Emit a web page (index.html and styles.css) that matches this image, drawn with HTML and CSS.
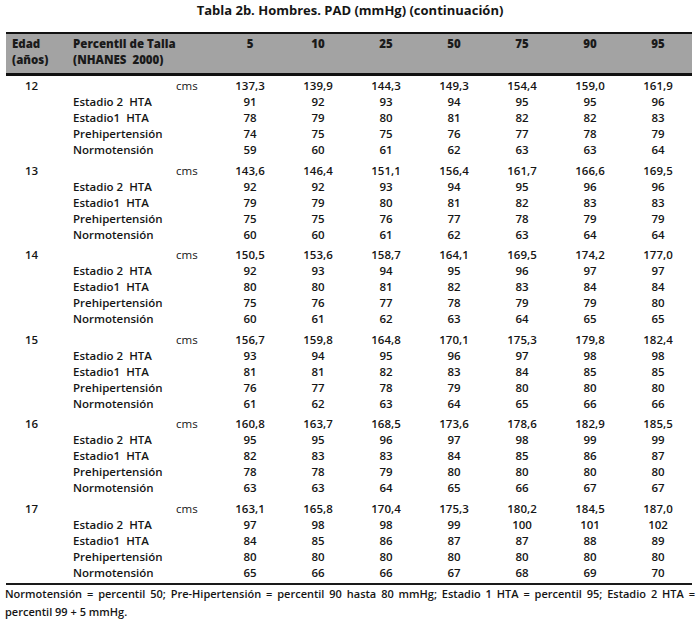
FILE: index.html
```html
<!DOCTYPE html>
<html lang="es">
<head>
<meta charset="utf-8">
<title>Tabla 2b</title>
<link rel="stylesheet" href="styles.css">
</head>
<body>
<div class="page">
  <h1 class="title">Tabla 2b. Hombres. PAD (mmHg) (continuación)</h1>
  <div class="table">
    <div class="head">
      <div class="hcell age-h"><div>Edad</div><div>(años)</div></div>
      <div class="hcell label-h"><div>Percentil de Talla</div><div>(NHANES&nbsp; 2000)</div></div>
      <div class="hcell"></div>
      <div class="hcell num">5</div>
      <div class="hcell num">10</div>
      <div class="hcell num">25</div>
      <div class="hcell num">50</div>
      <div class="hcell num">75</div>
      <div class="hcell num">90</div>
      <div class="hcell num">95</div>
    </div>

    <div class="block">
      <div class="row"><span class="age">12</span><span class="label"></span><span class="unit">cms</span><span class="num">137,3</span><span class="num">139,9</span><span class="num">144,3</span><span class="num">149,3</span><span class="num">154,4</span><span class="num">159,0</span><span class="num">161,9</span></div>
      <div class="row"><span class="age"></span><span class="label">Estadio 2&nbsp; HTA</span><span class="unit"></span><span class="num">91</span><span class="num">92</span><span class="num">93</span><span class="num">94</span><span class="num">95</span><span class="num">95</span><span class="num">96</span></div>
      <div class="row"><span class="age"></span><span class="label">Estadio1&nbsp; HTA</span><span class="unit"></span><span class="num">78</span><span class="num">79</span><span class="num">80</span><span class="num">81</span><span class="num">82</span><span class="num">82</span><span class="num">83</span></div>
      <div class="row"><span class="age"></span><span class="label">Prehipertensión</span><span class="unit"></span><span class="num">74</span><span class="num">75</span><span class="num">75</span><span class="num">76</span><span class="num">77</span><span class="num">78</span><span class="num">79</span></div>
      <div class="row"><span class="age"></span><span class="label">Normotensión</span><span class="unit"></span><span class="num">59</span><span class="num">60</span><span class="num">61</span><span class="num">62</span><span class="num">63</span><span class="num">63</span><span class="num">64</span></div>
    </div>

    <div class="block">
      <div class="row"><span class="age">13</span><span class="label"></span><span class="unit">cms</span><span class="num">143,6</span><span class="num">146,4</span><span class="num">151,1</span><span class="num">156,4</span><span class="num">161,7</span><span class="num">166,6</span><span class="num">169,5</span></div>
      <div class="row"><span class="age"></span><span class="label">Estadio 2&nbsp; HTA</span><span class="unit"></span><span class="num">92</span><span class="num">92</span><span class="num">93</span><span class="num">94</span><span class="num">95</span><span class="num">96</span><span class="num">96</span></div>
      <div class="row"><span class="age"></span><span class="label">Estadio1&nbsp; HTA</span><span class="unit"></span><span class="num">79</span><span class="num">79</span><span class="num">80</span><span class="num">81</span><span class="num">82</span><span class="num">83</span><span class="num">83</span></div>
      <div class="row"><span class="age"></span><span class="label">Prehipertensión</span><span class="unit"></span><span class="num">75</span><span class="num">75</span><span class="num">76</span><span class="num">77</span><span class="num">78</span><span class="num">79</span><span class="num">79</span></div>
      <div class="row"><span class="age"></span><span class="label">Normotensión</span><span class="unit"></span><span class="num">60</span><span class="num">60</span><span class="num">61</span><span class="num">62</span><span class="num">63</span><span class="num">64</span><span class="num">64</span></div>
    </div>

    <div class="block">
      <div class="row"><span class="age">14</span><span class="label"></span><span class="unit">cms</span><span class="num">150,5</span><span class="num">153,6</span><span class="num">158,7</span><span class="num">164,1</span><span class="num">169,5</span><span class="num">174,2</span><span class="num">177,0</span></div>
      <div class="row"><span class="age"></span><span class="label">Estadio 2&nbsp; HTA</span><span class="unit"></span><span class="num">92</span><span class="num">93</span><span class="num">94</span><span class="num">95</span><span class="num">96</span><span class="num">97</span><span class="num">97</span></div>
      <div class="row"><span class="age"></span><span class="label">Estadio1&nbsp; HTA</span><span class="unit"></span><span class="num">80</span><span class="num">80</span><span class="num">81</span><span class="num">82</span><span class="num">83</span><span class="num">84</span><span class="num">84</span></div>
      <div class="row"><span class="age"></span><span class="label">Prehipertensión</span><span class="unit"></span><span class="num">75</span><span class="num">76</span><span class="num">77</span><span class="num">78</span><span class="num">79</span><span class="num">79</span><span class="num">80</span></div>
      <div class="row"><span class="age"></span><span class="label">Normotensión</span><span class="unit"></span><span class="num">60</span><span class="num">61</span><span class="num">62</span><span class="num">63</span><span class="num">64</span><span class="num">65</span><span class="num">65</span></div>
    </div>

    <div class="block">
      <div class="row"><span class="age">15</span><span class="label"></span><span class="unit">cms</span><span class="num">156,7</span><span class="num">159,8</span><span class="num">164,8</span><span class="num">170,1</span><span class="num">175,3</span><span class="num">179,8</span><span class="num">182,4</span></div>
      <div class="row"><span class="age"></span><span class="label">Estadio 2&nbsp; HTA</span><span class="unit"></span><span class="num">93</span><span class="num">94</span><span class="num">95</span><span class="num">96</span><span class="num">97</span><span class="num">98</span><span class="num">98</span></div>
      <div class="row"><span class="age"></span><span class="label">Estadio1&nbsp; HTA</span><span class="unit"></span><span class="num">81</span><span class="num">81</span><span class="num">82</span><span class="num">83</span><span class="num">84</span><span class="num">85</span><span class="num">85</span></div>
      <div class="row"><span class="age"></span><span class="label">Prehipertensión</span><span class="unit"></span><span class="num">76</span><span class="num">77</span><span class="num">78</span><span class="num">79</span><span class="num">80</span><span class="num">80</span><span class="num">80</span></div>
      <div class="row"><span class="age"></span><span class="label">Normotensión</span><span class="unit"></span><span class="num">61</span><span class="num">62</span><span class="num">63</span><span class="num">64</span><span class="num">65</span><span class="num">66</span><span class="num">66</span></div>
    </div>

    <div class="block">
      <div class="row"><span class="age">16</span><span class="label"></span><span class="unit">cms</span><span class="num">160,8</span><span class="num">163,7</span><span class="num">168,5</span><span class="num">173,6</span><span class="num">178,6</span><span class="num">182,9</span><span class="num">185,5</span></div>
      <div class="row"><span class="age"></span><span class="label">Estadio 2&nbsp; HTA</span><span class="unit"></span><span class="num">95</span><span class="num">95</span><span class="num">96</span><span class="num">97</span><span class="num">98</span><span class="num">99</span><span class="num">99</span></div>
      <div class="row"><span class="age"></span><span class="label">Estadio1&nbsp; HTA</span><span class="unit"></span><span class="num">82</span><span class="num">83</span><span class="num">83</span><span class="num">84</span><span class="num">85</span><span class="num">86</span><span class="num">87</span></div>
      <div class="row"><span class="age"></span><span class="label">Prehipertensión</span><span class="unit"></span><span class="num">78</span><span class="num">78</span><span class="num">79</span><span class="num">80</span><span class="num">80</span><span class="num">80</span><span class="num">80</span></div>
      <div class="row"><span class="age"></span><span class="label">Normotensión</span><span class="unit"></span><span class="num">63</span><span class="num">63</span><span class="num">64</span><span class="num">65</span><span class="num">66</span><span class="num">67</span><span class="num">67</span></div>
    </div>

    <div class="block">
      <div class="row"><span class="age">17</span><span class="label"></span><span class="unit">cms</span><span class="num">163,1</span><span class="num">165,8</span><span class="num">170,4</span><span class="num">175,3</span><span class="num">180,2</span><span class="num">184,5</span><span class="num">187,0</span></div>
      <div class="row"><span class="age"></span><span class="label">Estadio 2&nbsp; HTA</span><span class="unit"></span><span class="num">97</span><span class="num">98</span><span class="num">98</span><span class="num">99</span><span class="num">100</span><span class="num">101</span><span class="num">102</span></div>
      <div class="row"><span class="age"></span><span class="label">Estadio1&nbsp; HTA</span><span class="unit"></span><span class="num">84</span><span class="num">85</span><span class="num">86</span><span class="num">87</span><span class="num">87</span><span class="num">88</span><span class="num">89</span></div>
      <div class="row"><span class="age"></span><span class="label">Prehipertensión</span><span class="unit"></span><span class="num">80</span><span class="num">80</span><span class="num">80</span><span class="num">80</span><span class="num">80</span><span class="num">80</span><span class="num">80</span></div>
      <div class="row"><span class="age"></span><span class="label">Normotensión</span><span class="unit"></span><span class="num">65</span><span class="num">66</span><span class="num">66</span><span class="num">67</span><span class="num">68</span><span class="num">69</span><span class="num">70</span></div>
    </div>
  </div>
  <p class="note">Normotensión = percentil 50; Pre-Hipertensión = percentil 90 hasta 80 mmHg; Estadio 1 HTA = percentil 95; Estadio 2 HTA = percentil 99 + 5 mmHg.</p>
</div>
</body>
</html>
```

FILE: styles.css
```css
html, body {
  margin: 0;
  padding: 0;
  background: #ffffff;
}

.page {
  width: 700px;
  font-family: "Open Sans", "Noto Sans", sans-serif;
  color: #151515;
}

.title {
  margin: 0;
  padding-top: 2px;
  height: 30px;
  text-align: center;
  font-size: 13px;
  font-weight: 700;
  line-height: 16px;
}

.table {
  margin-left: 6px;
  width: 686px;
  border-bottom: 2px solid #1a1a1a;
}

.head,
.row {
  display: grid;
  grid-template-columns: 60px 105px 45px repeat(7, 68px);
}

.head {
  background: #a3a3a3;
  border-top: 2px solid #111;
  border-bottom: 3px solid #111;
  height: 37px;
  padding-top: 2px;
  font-size: 11.5px;
  font-weight: 800;
  line-height: 16px;
  color: #1a1a1a;
}

.hcell.age-h {
  padding-left: 6px;
}

.hcell.label-h {
  padding-left: 7px;
  white-space: nowrap;
}

.num {
  text-align: center;
}

.block {
  padding-top: 2px;
  padding-bottom: 2.5px;
}

.row {
  height: 16px;
  font-size: 11.5px;
  font-weight: 600;
  line-height: 16px;
}

.age {
  padding-left: 19px;
}

.label {
  padding-left: 7px;
  white-space: nowrap;
}

.unit {
  padding-left: 5px;
  font-weight: 400;
}

.note {
  margin: 0;
  padding: 0 5px;
  text-align: justify;
  font-size: 11px;
  font-weight: 600;
  line-height: 18px;
}
```
